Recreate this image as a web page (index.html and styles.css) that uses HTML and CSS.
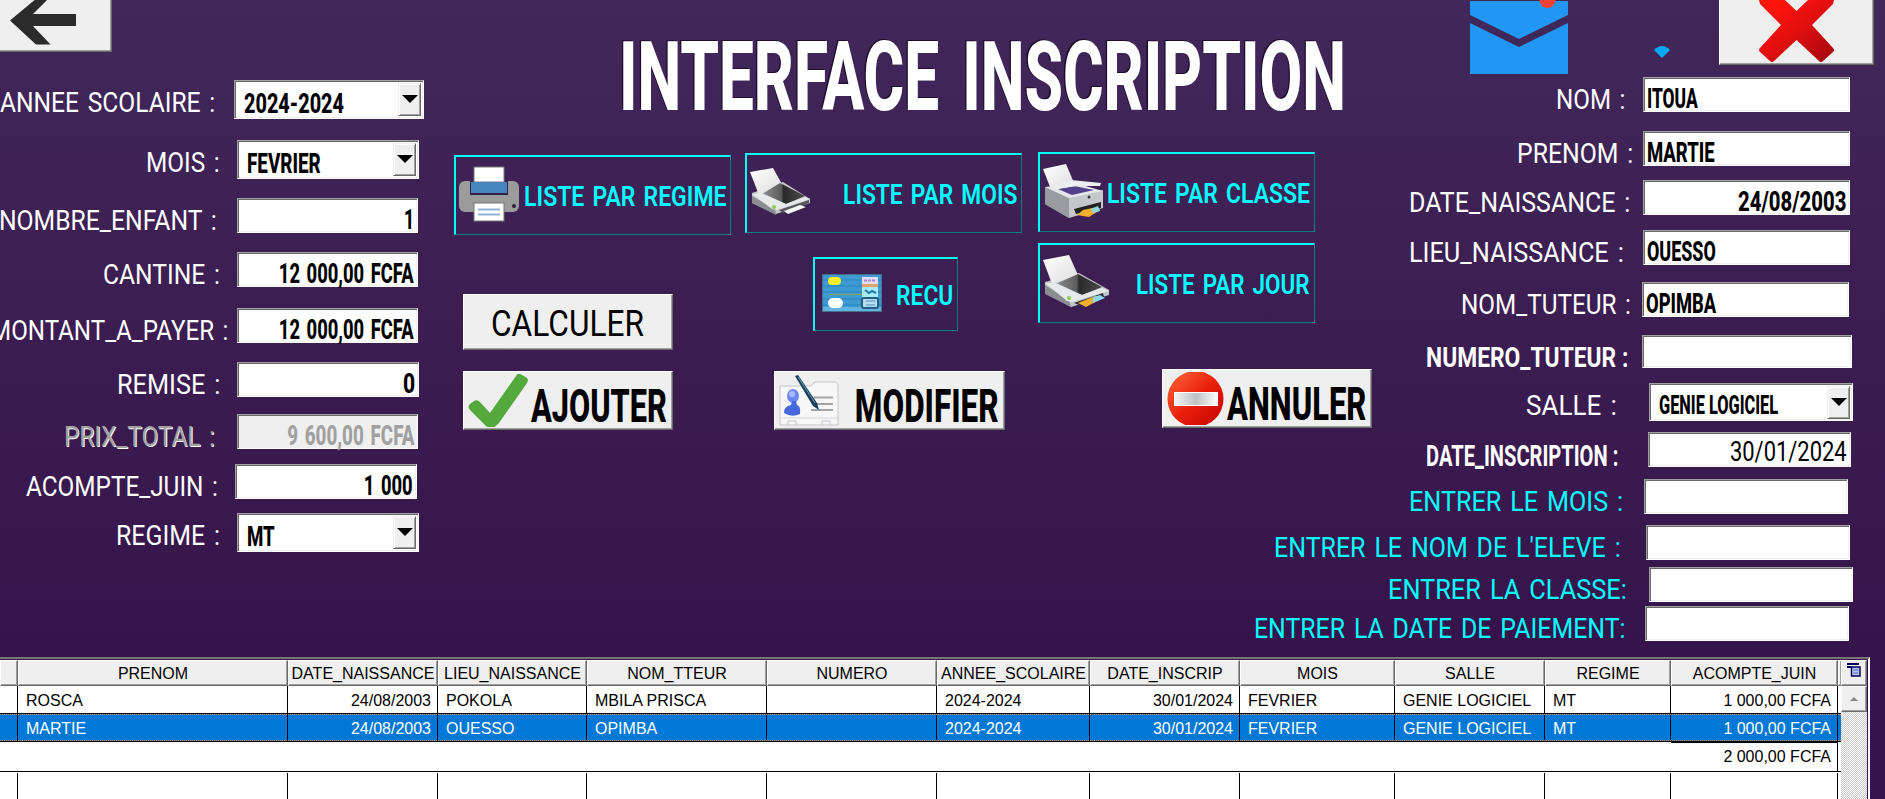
FILE: index.html
```html
<!DOCTYPE html>
<html lang="fr">
<head>
<meta charset="utf-8">
<title>Interface inscription</title>
<link rel="stylesheet" href="styles.css">
</head>
<body>
<main class="screen">
  <section class="left">
    <div class="back-wrap">
      <button class="push back" aria-label="Retour">
        <svg width="76" height="46" viewBox="0 0 76 46"><path d="M37-2 L10 20.500 L36 44.500 H50.500 L33 26 H76 V14 H33 L49-2z" fill="#2b2b2b"/></svg>
      </button>
    </div>
    <div class="rows left-rows">
      <div class="row"><span class="label"><span class="fit" data-w="215">ANNEE SCOLAIRE :</span></span><div class="field combo"><span class="fit" data-w="100">2024-2024</span><i class="arrow"></i></div></div>
      <div class="row"><span class="label"><span class="fit" data-w="74">MOIS :</span></span><div class="field combo"><span class="fit" data-w="74">FEVRIER</span><i class="arrow"></i></div></div>
      <div class="row"><span class="label"><span class="fit" data-w="218">NOMBRE_ENFANT :</span></span><div class="field num"><span class="fit" data-w="10">1</span></div></div>
      <div class="row"><span class="label"><span class="fit" data-w="117">CANTINE :</span></span><div class="field num"><span class="fit" data-w="135">12 000,00 FCFA</span></div></div>
      <div class="row"><span class="label"><span class="fit" data-w="238">MONTANT_A_PAYER :</span></span><div class="field num"><span class="fit" data-w="135">12 000,00 FCFA</span></div></div>
      <div class="row"><span class="label"><span class="fit" data-w="104">REMISE :</span></span><div class="field num"><span class="fit" data-w="12">0</span></div></div>
      <div class="row off"><span class="label"><span class="fit" data-w="151">PRIX_TOTAL :</span></span><div class="field num"><span class="fit" data-w="127">9 600,00 FCFA</span></div></div>
      <div class="row"><span class="label"><span class="fit" data-w="192">ACOMPTE_JUIN :</span></span><div class="field num"><span class="fit" data-w="49">1 000</span></div></div>
      <div class="row"><span class="label"><span class="fit" data-w="104">REGIME :</span></span><div class="field combo"><span class="fit" data-w="28">MT</span><i class="arrow"></i></div></div>
    </div>
  </section>

  <section class="center">
    <h1 class="title"><span class="fit" data-w="727">INTERFACE INSCRIPTION</span></h1>
    <div class="actions">
      <div class="stack stack-a">
        <button class="outline">
          <svg width="60" height="56" viewBox="0 0 60 56"><rect y="15" width="60" height="31" rx="6" fill="#9b9b9b"/><rect x="11" y="15" width="38" height="14" fill="#34204b"/><rect x="15" y="1" width="30" height="15" fill="#fff" stroke="#777"/><rect x="12" y="16" width="36" height="11" fill="#4686bd"/><rect x="15" y="37" width="30" height="18" fill="#fff" stroke="#777"/><path d="M19 43.500h22M19 48.500h22" stroke="#8fb3d9" stroke-width="2"/><circle cx="55" cy="40" r="2" fill="#332046"/></svg>
          <span class="txt"><span class="fit" data-w="202">LISTE PAR REGIME</span></span>
        </button>
        <button class="push calc"><span class="fit" data-w="153">CALCULER</span></button>
        <button class="push big add">
          <svg width="60" height="53" viewBox="0 0 60 53"><path d="M2 36Q-1 33 2 30L6 27Q9 25 12 28L22 39 48 2Q50-2 54 1L59 4Q61 6 59 9L31 49Q23 58 17 51z" fill="#54a93d"/></svg>
          <span class="txt"><span class="fit" data-w="136">AJOUTER</span></span>
        </button>
      </div>
      <div class="stack stack-b">
        <button class="outline">
          <svg width="60" height="48" viewBox="0 0 60 48"><defs><linearGradient id="sheet" x1="0" y1="0" x2="1" y2="1"><stop offset="0" stop-color="#fff"/><stop offset="1" stop-color="#dcdcdc"/></linearGradient><linearGradient id="glass" x1="0" y1="0" x2="1" y2="0"><stop offset="0" stop-color="#8d8d8d"/><stop offset=".45" stop-color="#5c5c5c"/><stop offset=".5" stop-color="#2a2a2a"/><stop offset="1" stop-color="#4a4a4a"/></linearGradient></defs><path d="M2 25 33 14 60 31 60 35 26 46 2 35z" fill="#c3c6ca"/><path d="M0 4 23 0 33 18 9 27z" fill="url(#sheet)"/><path d="M2 28 25 41 26 47 2 35z" fill="#8b8d90"/><path d="M12 26 30 15 55 28 36 36z" fill="url(#glass)"/><path d="M2 26 12 25 36 36 55 29 60 31 27 42 22 41z" fill="#e6e8ea"/><path d="M29 42 59 32 59 35 33 45z" fill="#55575a"/><path d="M34 43 50 37 56 39 38 46z" fill="#f8f8f8"/><circle cx="24" cy="39" r="2" fill="#8ad046"/></svg>
          <span class="txt"><span class="fit" data-w="174">LISTE PAR MOIS</span></span>
        </button>
        <button class="outline recu">
          <svg width="60" height="38" viewBox="0 0 60 38"><rect x=".5" y=".5" width="59" height="37" fill="#3d9bd2" stroke="#4a6d87"/><path d="M1 6h58M1 12h58M1 18h58M1 25h58M1 31h58" stroke="#2c82bb" stroke-width="1"/><rect x="1" y="33" width="58" height="4" fill="#62b5e2"/><rect x="6" y="3" width="13" height="8" rx="4" fill="#f5ee22"/><rect x="6" y="24" width="15" height="10" rx="5" fill="#fff"/><path d="M8 20.500h32" stroke="#8fa64b"/><rect x="40" y="3" width="16" height="7" fill="#e4dcf8"/><path d="M42 6.500h12" stroke="#a58be0" stroke-width="2" stroke-dasharray="3 1"/><rect x="40" y="10" width="16" height="3" fill="#e3a36d"/><rect x="40" y="13" width="16" height="10" fill="#a8eafa"/><path d="M43 16l4 3 3-2 4 2" stroke="#217aa8" stroke-width="2" fill="none"/><rect x="40" y="24" width="16" height="10" rx="2" fill="#b6ddf0" stroke="#255d82" stroke-width="2"/><path d="M44 27h9M44 31h9" stroke="#5192b9"/></svg>
          <span class="txt"><span class="fit" data-w="57">RECU</span></span>
        </button>
        <button class="push big edit">
          <svg width="60" height="53" viewBox="0 0 60 53"><path d="M1 12H32L36 8H57L59 11V51H1z" fill="#f7f7f8" stroke="#c3c4c8"/><path d="M1 44H59" stroke="#d4d5d8"/><path d="M9 51v-4h8v4M43 51v-4h8v4" fill="none" stroke="#c4c5c8"/><ellipse cx="14" cy="22" rx="6" ry="7" fill="#6a88f0"/><path d="M5 39Q5 32 12 31L13 27H17L18 31Q22 32 21 40Q13 44 5 39z" fill="#4668dc"/><circle cx="13" cy="20" r="3" fill="#aebcff"/><path d="M35 23.500H54M34 30H54M32 36H54" stroke="#a5a5a5" stroke-width="2"/><path d="M16 2 19 1 38 29 40 36 34 32z" fill="#183e5c"/><path d="M19 3 36 29" stroke="#6aa1c0"/></svg>
          <span class="txt"><span class="fit" data-w="144">MODIFIER</span></span>
        </button>
      </div>
      <div class="stack stack-c">
        <button class="outline">
          <svg width="60" height="54" viewBox="0 0 60 54"><path d="M0 5 23 0 31 19 9 28z" fill="url(#sheet)"/><path d="M2 23 26 33 60 26V44L26 54 2 40z" fill="#c6c7cb"/><path d="M2 23 26 34V54L2 40z" fill="#999ba0"/><path d="M2 23 12 22 28 18 60 27 26 34z" fill="#e6e7ea"/><path d="M15 25 31 22 51 26 29 31z" fill="#51418a"/><path d="M9 22 28 16 58 19 57 22 34 22 14 25z" fill="#eceef0"/><path d="M31 45 58 38V44L33 50z" fill="#222"/><path d="M34 51 40 46 54 43 57 46 46 53z" fill="#f2ae2e"/><path d="M48 45 55 42 57 47 50 49z" fill="#8cd7f2"/><circle cx="46" cy="33" r="1.500" fill="#333"/></svg>
          <span class="txt"><span class="fit" data-w="203">LISTE PAR CLASSE</span></span>
        </button>
        <button class="outline jour">
          <svg width="66" height="54" viewBox="0 0 66 54"><path d="M2 27 36 18 66 35 66 40 28 52 2 38z" fill="#c3c6ca"/><path d="M0 5 26 0 35 20 9 29z" fill="url(#sheet)"/><path d="M2 30 26 45 28 52 2 39z" fill="#8b8d90"/><path d="M13 29 35 19 59 32 39 40z" fill="url(#glass)"/><path d="M2 28 13 28 39 40 59 33 66 36 29 47 24 46z" fill="#e6e8ea"/><path d="M31 48 60 38 61 42 36 50z" fill="#2c2c2e"/><path d="M35 48 52 41 60 43 43 52z" fill="#f2ae2e"/><path d="M50 42 57 40 62 43 50 48z" fill="#8cd7f2"/><circle cx="26" cy="43" r="2" fill="#8ad046"/></svg>
          <span class="txt"><span class="fit" data-w="174">LISTE PAR JOUR</span></span>
        </button>
        <button class="push big cancel">
          <svg width="58" height="53" viewBox="0 0 58 53"><defs><linearGradient id="stop" x1="0" y1="0" x2="1" y2="1"><stop offset="0" stop-color="#ff6a3c"/><stop offset=".5" stop-color="#e9200c"/><stop offset="1" stop-color="#c40000"/></linearGradient><linearGradient id="bar"><stop offset="0" stop-color="#f4f4f4"/><stop offset=".5" stop-color="#bfc1c2"/><stop offset="1" stop-color="#fff"/></linearGradient></defs><circle cx="28.500" cy="27" r="28" fill="url(#stop)"/><rect x="7.500" y="20.500" width="43" height="13" fill="url(#bar)" stroke="#fff"/></svg>
          <span class="txt"><span class="fit" data-w="139">ANNULER</span></span>
        </button>
      </div>
    </div>
  </section>

  <section class="right">
    <div class="top-icons">
      <svg class="mail" width="98" height="75" viewBox="0 0 98 75"><path d="M0 1H98V15L49 39 0 15z" fill="#2196f3"/><path d="M0 23 49 47 98 23V74H0z" fill="#2196f3"/><circle cx="77.500" cy="0" r="8" fill="#f44336"/></svg>
      <svg class="wifi" width="16" height="12" viewBox="0 0 16 12"><path d="M0 4Q8-4 16 4L8 12z" fill="#03a9f4"/></svg>
      <button class="push close" aria-label="Fermer">
        <svg width="75" height="63" viewBox="0 0 75 63"><defs><linearGradient id="cross" x1="0" y1="0" x2="1" y2="1"><stop offset=".15" stop-color="#ff140c"/><stop offset=".5" stop-color="#e20f0f"/><stop offset="1" stop-color="#a1060f"/></linearGradient></defs><path d="M0 0H26L37.500 11 49 0H75L74 4 53 25 74 48Q76 50 74 52L64 61Q62 63 60 61L37.500 40 15 61Q13 63 11 61L1 52Q-1 50 1 48L22 25 1 4z" fill="url(#cross)"/></svg>
      </button>
    </div>
    <div class="rows right-rows">
      <div class="row"><span class="label"><span class="fit" data-w="69">NOM :</span></span><div class="field"><span class="fit" data-w="51">ITOUA</span></div></div>
      <div class="row"><span class="label"><span class="fit" data-w="116">PRENOM :</span></span><div class="field"><span class="fit" data-w="68">MARTIE</span></div></div>
      <div class="row"><span class="label"><span class="fit" data-w="221">DATE_NAISSANCE :</span></span><div class="field num"><span class="fit" data-w="108">24/08/2003</span></div></div>
      <div class="row"><span class="label"><span class="fit" data-w="215">LIEU_NAISSANCE :</span></span><div class="field"><span class="fit" data-w="69">OUESSO</span></div></div>
      <div class="row"><span class="label"><span class="fit" data-w="170">NOM_TUTEUR :</span></span><div class="field"><span class="fit" data-w="70">OPIMBA</span></div></div>
      <div class="row strong"><span class="label"><span class="fit" data-w="202">NUMERO_TUTEUR :</span></span><div class="field"></div></div>
      <div class="row"><span class="label"><span class="fit" data-w="91">SALLE :</span></span><div class="field combo small"><span class="fit" data-w="119">GENIE LOGICIEL</span><i class="arrow"></i></div></div>
      <div class="row strong"><span class="label"><span class="fit" data-w="192">DATE_INSCRIPTION :</span></span><div class="field num thin"><span class="fit" data-w="117">30/01/2024</span></div></div>
      <div class="row cyan"><span class="label"><span class="fit" data-w="214">ENTRER LE MOIS :</span></span><div class="field"></div></div>
      <div class="row cyan"><span class="label"><span class="fit" data-w="347">ENTRER LE NOM DE L'ELEVE :</span></span><div class="field"></div></div>
      <div class="row cyan"><span class="label"><span class="fit" data-w="239">ENTRER LA CLASSE:</span></span><div class="field"></div></div>
      <div class="row cyan"><span class="label"><span class="fit" data-w="372">ENTRER LA DATE DE PAIEMENT:</span></span><div class="field"></div></div>
    </div>
  </section>

  <section class="grid">
    <div class="grid-body">
      <div class="tr head"><span></span><span>PRENOM</span><span>DATE_NAISSANCE</span><span>LIEU_NAISSANCE</span><span>NOM_TTEUR</span><span>NUMERO</span><span>ANNEE_SCOLAIRE</span><span>DATE_INSCRIP</span><span>MOIS</span><span>SALLE</span><span>REGIME</span><span>ACOMPTE_JUIN</span><span></span></div>
      <div class="tr"><span></span><span>ROSCA</span><span class="r">24/08/2003</span><span>POKOLA</span><span>MBILA PRISCA</span><span></span><span>2024-2024</span><span class="r">30/01/2024</span><span>FEVRIER</span><span>GENIE LOGICIEL</span><span>MT</span><span class="r">1 000,00 FCFA</span><span></span></div>
      <div class="tr selected"><span></span><span>MARTIE</span><span class="r">24/08/2003</span><span>OUESSO</span><span>OPIMBA</span><span></span><span>2024-2024</span><span class="r">30/01/2024</span><span>FEVRIER</span><span>GENIE LOGICIEL</span><span>MT</span><span class="r">1 000,00 FCFA</span><span></span></div>
      <div class="total"><span>2 000,00 FCFA</span></div>
      <div class="tr empty"><span></span><span></span><span></span><span></span><span></span><span></span><span></span><span></span><span></span><span></span><span></span><span></span><span></span></div>
    </div>
    <div class="scroll">
      <div class="corner"><svg width="14" height="14" viewBox="0 0 14 14"><path d="M0 1H12M0 4H4" stroke="#00005a" stroke-width="2"/><rect x="4.500" y="4" width="8.500" height="9" fill="#b5c4f2" stroke="#00005a" stroke-width="1.500"/><path d="M6.500 7H11M6.500 10H11" stroke="#4a62b8"/></svg></div>
      <div class="up"><i></i></div>
    </div>
  </section>
</main>
<script src="fit.js"></script>
</body>
</html>
```

FILE: fit.js
```js
document.querySelectorAll('.fit').forEach(function (el) {
  var target = parseFloat(el.dataset.w);
  el.style.transform = 'scaleX(' + target / el.offsetWidth + ')';
});
```

FILE: styles.css
```css
* { box-sizing: border-box; }
body { margin: 0; font-family: Roboto, "Liberation Sans", sans-serif; overflow: hidden; }
.screen {
  width: 1885px; height: 799px; overflow: hidden;
  display: grid; grid-template-columns: 440px 940px 505px; grid-template-rows: 657px 142px;
  background: linear-gradient(#41285a 0, #3c1e52 300px, #36144b 650px, #35134a);
}
.fit { display: inline-block; flex: none; white-space: nowrap; transform-origin: left center; }

/* Push buttons */
button { font-family: inherit; padding: 0; margin: 0; display: flex; align-items: center; text-align: left; }
.push { background: #efefef; color: #000; border: 1px solid #fff; border-right-color: #696969; border-bottom-color: #696969; box-shadow: inset -1px -1px #a0a0a0; }
.outline { width: 277px; height: 80px; padding: 0 4px 3px 3px; background: none; color: #0ff; border: solid #0ff; border-width: 2px 1px 1px 2px; border-right-color: #008080; border-bottom-color: #008080; font-size: 28px; font-weight: 600; word-spacing: 3px; }
.outline svg { flex: none; }
.txt { flex: 1; min-width: 0; display: flex; justify-content: flex-end; }
.outline .txt { padding-top: 5px; }
.txt .fit { transform-origin: right center; }

/* Form rows */
.back-wrap { height: 80px; }
.back { width: 112px; height: 52px; border-top: 0; border-left: 0; align-items: flex-start; }
.rows { display: grid; }
.left-rows { grid-template-rows: 60px 58px 54px 56px 54px 52px 50px 49px 39px; }
.right-rows { grid-template-rows: 54px 49px 50px 52px 53px 48px 49px 47px 46px 42px 39px 35px; }
.row { display: flex; align-items: flex-start; --gap: 17px; --w: 181px; --label: 220px; }
.label { flex: none; width: var(--label); height: 45px; display: flex; align-items: center; justify-content: flex-end; color: #fff; font-size: 28px; word-spacing: 3px; }
.label .fit { transform-origin: right center; }
.field { flex: none; width: var(--w); height: 35px; margin-left: var(--gap); padding: 8px 3px 0; display: flex; align-items: center; color: #000; font-size: 28px; font-weight: 800; word-spacing: 3px; background: #fff; border: 1px solid #a0a0a0; border-right-color: #fff; border-bottom-color: #fff; box-shadow: inset 1px 1px #696969, inset -1px -1px #efefef; }
.field.num { justify-content: flex-end; }
.field.num .fit { transform-origin: right center; }
.combo { height: 39px; padding: 7px 2px 0 9px; position: relative; }
.arrow { position: absolute; right: 2px; top: 2px; width: 23px; height: 33px; background: #efefef; border: 1px solid #efefef; border-right-color: #696969; border-bottom-color: #696969; box-shadow: inset 1px 1px #fff, inset -1px -1px #a0a0a0; }
.arrow::after { content: ""; position: absolute; left: 3px; top: 11px; border: 8px solid transparent; border-top-color: #000; border-bottom: 0; }
.field.small { font-size: 25px; height: 38px; word-spacing: 0; }
.field.thin { font-size: 27px; font-weight: 400; padding-top: 4px; }
.off .label { color: #a0a0a0; text-shadow: 1px 1px #fff; }
.off .field { background: #efefef; color: #a0a0a0; }
.strong .label { font-weight: 700; word-spacing: 0; }
.cyan .label { color: #0ff; }
.left-rows .row:nth-child(1) { --label: 215px; --gap: 19px; --w: 190px; }
.left-rows .row:nth-child(2) { --w: 182px; }
.left-rows .row:nth-child(3) { --label: 217px; --gap: 20px; }
.left-rows .row:nth-child(5) { --label: 228px; --gap: 9px; }
.left-rows .row:nth-child(6) { --w: 182px; }
.left-rows .row:nth-child(7) { --label: 215px; --gap: 22px; }
.left-rows .row:nth-child(8) { --label: 218px; --gap: 17px; --w: 182px; }
.left-rows .row:nth-child(9) { --w: 182px; }
.right-rows .row { --w: 204px; }
.right-rows .row:nth-child(-n+5) { --w: 207px; }
.right-rows .row:nth-child(1) { --label: 245px; --gap: 18px; }
.right-rows .row:nth-child(2) { --label: 253px; --gap: 10px; }
.right-rows .row:nth-child(3) { --label: 250px; --gap: 13px; }
.right-rows .row:nth-child(4) { --label: 244px; --gap: 19px; }
.right-rows .row:nth-child(5) { --label: 251px; --gap: 11px; }
.right-rows .row:nth-child(6) { --label: 248px; --gap: 14px; --w: 210px; }
.right-rows .row:nth-child(6) .field { height: 33px; }
.right-rows .row:nth-child(7) { --label: 237px; --gap: 32px; }
.right-rows .row:nth-child(8) { --label: 238px; --gap: 30px; --w: 203px; }
.right-rows .row:nth-child(8) .label { font-size: 29px; height: 48px; }
.right-rows .row:nth-child(9) { --label: 243px; --gap: 21px; }
.right-rows .row:nth-child(10) { --label: 241px; --gap: 25px; }
.right-rows .row:nth-child(11) { --label: 247px; --gap: 22px; }
.right-rows .row:nth-child(12) { --label: 246px; --gap: 19px; }

/* Title and action buttons */
.title { margin: 0; height: 152px; line-height: 155px; padding-left: 179px; color: #fff; font-size: 96px; font-weight: 800; text-shadow: -2px -1px #1d0d2c; word-spacing: 12px; }
.actions { display: flex; align-items: flex-start; padding-left: 14px; }
.stack { display: flex; flex-direction: column; }
.stack-a { width: 277px; margin: 3px 14px 0 0; }
.stack-b { width: 277px; margin: 1px 16px 0 0; }
.stack-c { width: 334px; }
.calc { width: 210px; height: 56px; margin: 59px 0 0 9px; padding: 4px 0 0 27px; font-size: 36px; }
.big { height: 59px; padding: 0 5px 0 4px; font-size: 47px; font-weight: 800; }
.big svg { flex: none; }
.big .txt { padding-top: 9px; }
.add { width: 210px; margin: 21px 0 0 9px; }
.recu { width: 145px; height: 74px; margin: 24px 0 0 68px; padding-left: 7px; }
.edit { width: 231px; margin: 40px 0 0 29px; }
.jour { margin-top: 11px; }
.cancel { width: 210px; margin: 46px 0 0 124px; }

/* Top right icons */
.top-icons { height: 77px; display: flex; align-items: flex-start; padding-left: 90px; }
.wifi { margin: 46px 49px 0 86px; }
.close { width: 155px; height: 65px; border-top: 0; justify-content: center; align-items: flex-start; }

/* Records grid */
.grid { grid-column: 1 / 4; width: 1870px; display: flex; border-top: 2px solid #777; border-right: 2px solid #fff; font-family: "Liberation Sans", Arial, sans-serif; font-size: 16px; padding-top: 1px; }
.grid-body { width: 1841px; background: #fff; }
.tr { height: 28px; display: grid; grid-template-columns: 18px 270px 150px 149px 180px 170px 153px 150px 155px 150px 126px 167px 3px; line-height: 29px; border-bottom: 1px solid #000; }
.tr > span { border-right: 1px solid #000; padding: 0 6px 0 8px; white-space: nowrap; overflow: hidden; }
.tr > span:last-child { border-right: 0; padding: 0; }
.tr .r { text-align: right; }
.head { height: 26px; line-height: 26px; border: 0; }
.head > span { background: #efefef; padding: 0; text-align: center; border: 1px solid #fff; border-right-color: #696969; border-bottom-color: #696969; box-shadow: inset -1px -1px #a0a0a0; }
.selected { background: #0078d7; color: #fff; position: relative; }
.selected::before { content: ""; position: absolute; inset: 0; border: dotted #f08a33; border-width: 1px 0; }
.total { height: 30px; line-height: 28px; border-bottom: 1px solid #000; display: flex; justify-content: flex-end; padding-right: 3px; }
.total span { width: 167px; padding-right: 6px; border-top: 1px solid #000; border-right: 1px solid #000; text-align: right; }
.empty { margin-top: 1px; height: 27px; }
.scroll { width: 27px; border-right: 1px solid #35134a; background: repeating-conic-gradient(#fff 0 25%, #c8c8c8 0 50%) 0 0 / 2px 2px; }
.corner, .up { height: 26px; background: #efefef; display: flex; align-items: center; justify-content: center; border: 1px solid #fff; border-right-color: #696969; border-bottom-color: #696969; box-shadow: inset -1px -1px #a0a0a0; }
.corner { padding-bottom: 6px; }
.up i { border: 4px solid transparent; border-bottom-color: #888; border-top: 0; }
```
